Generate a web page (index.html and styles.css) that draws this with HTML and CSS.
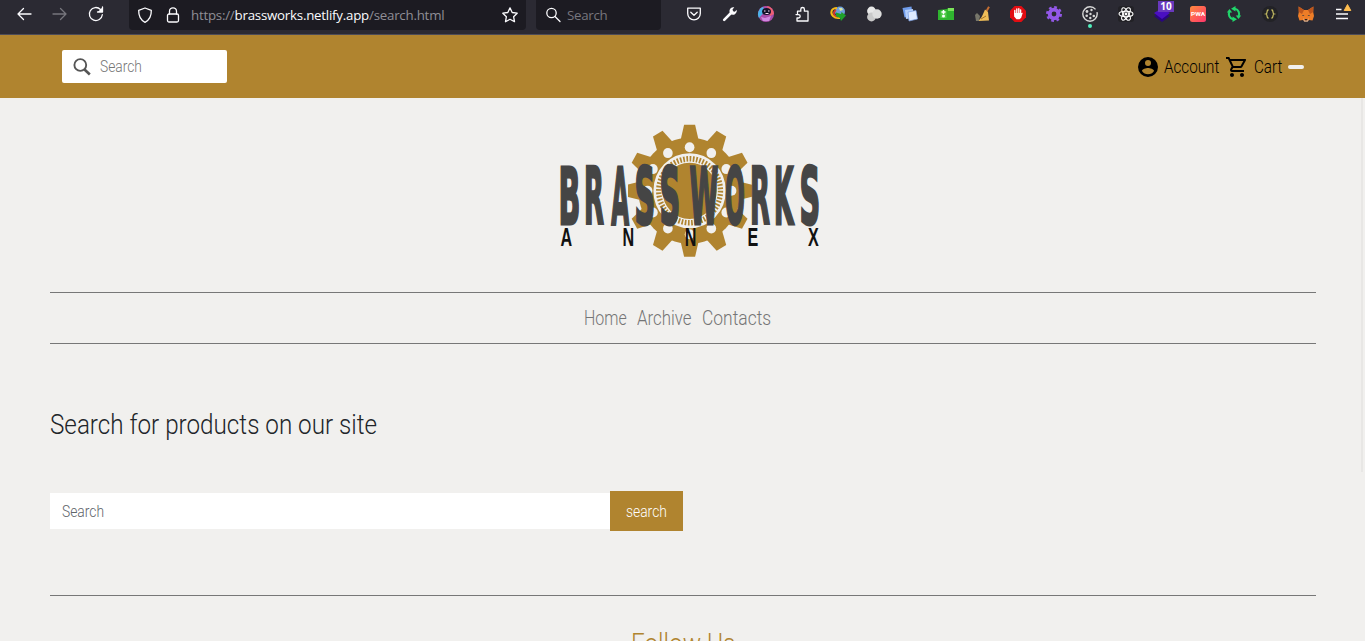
FILE: index.html
```html
<!DOCTYPE html>
<html lang="en">
<head>
<meta charset="utf-8">
<title>Brassworks Annex</title>
<link rel="stylesheet" href="styles.css">
</head>
<body>
<div class="chrome">
  <div class="history">
    <svg viewBox="0 0 16 16" class="ico"><path d="M15 8H2M7.500 2.500L2 8l5.500 5.500"/></svg>
    <svg viewBox="0 0 16 16" class="ico dim"><path d="M1 8h13M8.500 2.500L14 8l-5.500 5.500"/></svg>
    <svg viewBox="0 0 16 16" class="ico"><path d="M14.300 8.700A6.500 6.500 0 1 1 12.500 3.500L14 5M14.500 1v5H9.500"/><path d="M14.800 1v5h-5z" fill="#fbfbfe" stroke="none"/></svg>
  </div>
  <div class="urlbar">
    <svg viewBox="0 0 16 16" class="ico"><path d="M8 1l6.300 2.300C14.500 9 12.500 13 8 15.300 3.500 13 1.500 9 1.700 3.300z"/></svg>
    <svg viewBox="0 0 16 16" class="ico"><rect x="2.500" y="7" width="11" height="8" rx="1.500"/><path d="M4.500 7V4.300a3.500 3.500 0 0 1 7 0V7"/></svg>
    <span class="url">https://<b>brassworks.netlify.app</b>/search.html</span>
    <svg viewBox="0 0 16 16" class="ico star"><path d="M8 .9l2.200 4.600 5 .7-3.600 3.500.9 5L8 12.300l-4.500 2.400.9-5L.8 6.200l5-.7z"/></svg>
  </div>
  <div class="quick">
    <svg viewBox="0 0 16 16" class="ico"><circle cx="6.500" cy="6" r="4.700"/><path d="M10 9.500l5 5"/></svg>
    <span>Search</span>
  </div>
  <div class="addons">
    <svg viewBox="0 0 16 16" class="ico"><path d="M1.700 2.200h12.600v5.300a6.300 6.300 0 0 1-12.600 0z"/><path d="M4.800 6.300L8 9.300l3.200-3"/></svg>
    <svg viewBox="0 0 16 16"><path d="M2.200 13.800L9.500 6.500" stroke="#fbfbfe" stroke-width="2.600" stroke-linecap="round"/><path d="M14.700 3.700a4 4 0 0 1-6 4.400L7.500 6a4 4 0 0 1 4.800-4.700L10.500 3.500l.6 1.700 1.700.5z" fill="#fbfbfe"/></svg>
    <svg viewBox="0 0 16 16"><circle cx="8" cy="8" r="8" fill="#a94ca9"/><path d="M1 12A8 8 0 0 1 5 .7L7 5z" fill="#4bb4e9"/><path d="M9 0a8 8 0 0 1 7 8l-4 2z" fill="#ee6073"/><ellipse cx="8.500" cy="5.500" rx="4.500" ry="3.500" fill="#15142a"/><path d="M6 5h1.500m2.500 0h1.500M7.500 7.500h3" stroke="#ffd9f5"/><path d="M3 11l4 1 6-2-2 5H5z" fill="#cf88df"/></svg>
    <svg viewBox="0 0 16 16" class="ico"><path d="M2 7V4.500M2 7h1.800a1.700 1.700 0 0 1 0 3.500H2V15h12V5.500h-3.500V3.200a1.800 1.800 0 0 0-3.600 0v2.300H3.500V7"  stroke="none"/><path d="M3.500 7.500V5.200h3.300V3.300a1.800 1.800 0 0 1 3.600 0v1.900H14V15H3v-3h1.500a1.700 1.700 0 0 0 0-3.400H2"/></svg>
    <svg viewBox="0 0 16 16"><circle cx="10" cy="5.500" r="5" fill="#6e9fda"/><path d="M7 2C1 2 0 7 3 10s5 2 7 2" fill="none" stroke="#f2b817" stroke-width="2"/><path d="M6 4C2 7 4 10 8 11" fill="none" stroke="#db3931" stroke-width="1.600"/><path d="M6 6.500l5 1.500.5-2L16 9.500 11 15l-1-3-4-1.500z" fill="#1fa12b"/><path d="M9 2h3l1 2-3 1z" fill="#d7e4a7"/></svg>
    <svg viewBox="0 0 16 16"><circle cx="5.500" cy="5" r="4.400" fill="#e8e8e8"/><circle cx="5.500" cy="11" r="4.400" fill="#c9c9c9"/><circle cx="11" cy="8" r="4.700" fill="#dedede"/></svg>
    <svg viewBox="0 0 16 16"><path d="M.5 2l9-1.500 1 9-8 2z" fill="#6f9bea"/><path d="M3 4l8-1 1 9-8 1z" fill="#b5cff9"/><path d="M6 6l8-1.500L15.500 13 7 15z" fill="#dfeafe" stroke="#789ee2" stroke-width=".7"/></svg>
    <svg viewBox="0 0 16 16"><path d="M0 4l9-1 1-1h6v12H0z" fill="#2fb52f"/><path d="M10 2h6v3h-6z" fill="#7be45a"/><path d="M2.500 5h6v7h-6z" fill="#56cc4d"/><path d="M5.500 4v4M3.500 6h4" stroke="#fff" stroke-width="1.500"/><circle cx="5.500" cy="10" r="1.500" fill="#fff"/></svg>
    <svg viewBox="0 0 16 16"><path d="M12 6L15 .8" stroke="#c56d31" stroke-width="2"/><path d="M11 3.500l3 2.500 1 8.500L4 15c4-3 5-7 7-11.500z" fill="#efbd58"/><path d="M1 9l2-2 3 3-1 5H2z" fill="#77766b"/><path d="M7 13l5-3" stroke="#a97528"/></svg>
    <svg viewBox="0 0 16 16"><path d="M4.700 0h6.600L16 4.700v6.600L11.300 16H4.700L0 11.300V4.700z" fill="#e20d12"/><path d="M4.800 8V4.500M6.800 7V3M8.800 7V2.800M10.600 8V4" stroke="#fff" stroke-width="1.400" stroke-linecap="round"/><path d="M4.100 7h7.200l1.500-.3-1.600 5-1.700 1.600H6.500L4.100 10.500z" fill="#fff"/></svg>
    <svg viewBox="0 0 16 16"><circle cx="8" cy="8" r="6.700" fill="none" stroke="#9358e8" stroke-width="2.600" stroke-dasharray="2.700 2.560"/><circle cx="8" cy="8" r="4.300" fill="none" stroke="#9358e8" stroke-width="3.800"/></svg>
    <svg viewBox="0 0 16 16" class="cookie"><circle cx="8" cy="8" r="7.200" fill="none" stroke="#d8d8d8" stroke-width="1.400" stroke-dasharray="40 3 2.240" stroke-dashoffset="0"/><g fill="#d8d8d8"><circle cx="5" cy="5.500" r="1.400"/><circle cx="4.700" cy="9.800" r="1.300"/><circle cx="8.500" cy="8" r="1.200"/><circle cx="8.300" cy="12" r="1.200"/><circle cx="11.800" cy="10" r="1.300"/><circle cx="9.500" cy="4" r="1.200"/></g><circle cx="8" cy="20" r="2" fill="#4fefbd"/></svg>
    <svg viewBox="0 0 16 16"><rect width="16" height="16" rx="3" fill="#222126"/><g fill="none" stroke="#fff" stroke-width="1.100"><ellipse cx="8" cy="8" rx="7" ry="2.700"/><ellipse cx="8" cy="8" rx="7" ry="2.700" transform="rotate(60 8 8)"/><ellipse cx="8" cy="8" rx="7" ry="2.700" transform="rotate(-60 8 8)"/></g><circle cx="8" cy="8" r="1.400" fill="#fff"/></svg>
    <div class="badged"><svg viewBox="0 0 16 16"><path d="M0 10l8-5 8 5-8 6z" fill="#2a0580"/><path d="M0 7l8-5 8 5-8 6z" fill="#4a0fc2"/></svg><span class="badge">10</span></div>
    <svg viewBox="0 0 16 16"><defs><linearGradient id="pwa" x2="1" y2="1"><stop stop-color="#ff8a3d"/><stop offset="1" stop-color="#ff356d"/></linearGradient></defs><rect width="16" height="16" rx="2.500" fill="url(#pwa)"/><text x="8" y="10" class="pwa" textLength="14" lengthAdjust="spacingAndGlyphs">PWA</text></svg>
    <svg viewBox="0 0 16 16"><path d="M7 13.200A5.300 5.300 0 0 1 3.500 5.500M9 2.800A5.300 5.300 0 0 1 12.500 10.500" fill="none" stroke="#20d66b" stroke-width="2"/><path d="M5 2.800L9.500 0v5.600zM11 13.200L6.500 16v-5.600zM.8 6.500h5.400L3.500 3zM9.800 9.500h5.400L12.500 13z" fill="#20d66b"/></svg>
    <svg viewBox="0 0 16 16"><circle cx="8" cy="8" r="8" fill="#222226"/><path d="M6.600 4H6c-1.500 0-.3 3.500-2 4 1.700.5.500 4 2 4h.6M9.400 4h.6c1.500 0 .3 3.500 2 4-1.700.5-.5 4-2 4h-.6" fill="none" stroke="#c5bc63" stroke-width="1.300"/></svg>
    <svg viewBox="0 0 16 16"><path d="M.6.600L6 4h4L15.400.600 15.200 6l.8 4-1.500 4.500L11 14l-1.500 1.500h-3L5 14l-3.500.5L0 10l.8-4z" fill="#ed7d27"/><path d="M.6.600L6 4 4 8 .8 6zM15.400.600L10 4l2 4 3.200-2z" fill="#bd561d"/><path d="M5 9l1.500 1H4zM11 9l-1.500 1H12z" fill="#263746"/><path d="M5 11.500l1.500 3h3l1.500-3-1 4H6z" fill="#d6c4b5"/><path d="M6.800 13h2.400v1.300H6.800z" fill="#29201f"/></svg>
    <svg viewBox="0 0 16 16" class="menu"><path d="M2 3.500h5.500M2 8h12M2 12.500h12" stroke="#fbfbfe" stroke-width="1.300"/><path d="M13.500-1.500l3.300 6h-6.600z" fill="#ffbd4f" stroke="#ffbd4f" stroke-linejoin="round"/></svg>
  </div>
</div>

<header class="topbar">
  <div class="finder">
    <svg viewBox="0 0 18 18"><circle cx="7.300" cy="7" r="5.900"/><path d="M11.500 11.500l5.300 5" class="handle"/></svg>
    <span class="abel t-find">Search</span>
  </div>
  <div class="tools">
    <svg viewBox="0 0 24 24" class="person"><path d="M12 2a10 10 0 1 0 0 20 10 10 0 0 0 0-20zm0 3a3 3 0 1 1 0 6 3 3 0 0 1 0-6zm0 14.200a7.200 7.200 0 0 1-6-3.220c.03-1.990 4-3.080 6-3.080 1.990 0 5.970 1.090 6 3.080a7.200 7.200 0 0 1-6 3.220z"/></svg>
    <span class="abel t-account">Account</span>
    <svg viewBox="0 0 24 24" class="cart"><path d="M15.550 13c.75 0 1.410-.41 1.750-1.030l3.580-6.490A.996.996 0 0 0 20.010 4H5.210l-.94-2H1v2h2l3.600 7.590-1.350 2.440C4.520 15.370 5.480 17 7 17h12v-2H7l1.100-2h7.450zM6.160 6h12.150l-2.760 5H8.530L6.160 6zM7 18c-1.100 0-1.990.9-1.990 2S5.900 22 7 22s2-.9 2-2-.9-2-2-2zm10 0c-1.100 0-1.990.9-1.990 2s.89 2 1.990 2 2-.9 2-2-.9-2-2-2z"/></svg>
    <span class="abel t-cart">Cart</span>
    <i class="count"></i>
  </div>
</header>

<div class="logo">
  <svg width="264" height="136" viewBox="558 123 264 136">
    <defs>
      <g id="tooth"><path d="M-9.500-50L-5.700-66h11.400L9.500-50z"/></g>
      <clipPath id="sides"><path d="M628 120h124v140H628z"/></clipPath>
    </defs>
    <g clip-path="url(#sides)"><g transform="translate(689.600 190.800) scale(.965 1)">
      <g fill="#b0842f">
        <circle r="53"/>
        <use href="#tooth"/><use href="#tooth" transform="rotate(30)"/><use href="#tooth" transform="rotate(60)"/><use href="#tooth" transform="rotate(90)"/><use href="#tooth" transform="rotate(120)"/><use href="#tooth" transform="rotate(150)"/><use href="#tooth" transform="rotate(180)"/><use href="#tooth" transform="rotate(210)"/><use href="#tooth" transform="rotate(240)"/><use href="#tooth" transform="rotate(270)"/><use href="#tooth" transform="rotate(300)"/><use href="#tooth" transform="rotate(330)"/>
      </g>
      <g fill="#f1f0ee">
        <circle cy="-43.500" r="5"/><circle cy="43.500" r="5"/><circle cx="43.500" r="5"/><circle cx="-43.500" r="5"/>
        <circle cx="22.500" cy="-37.700" r="5"/><circle cx="-22.500" cy="-37.700" r="5"/><circle cx="22.500" cy="37.700" r="5"/><circle cx="-22.500" cy="37.700" r="5"/>
        <circle cx="38" cy="-21.700" r="5"/><circle cx="-38" cy="-21.700" r="5"/><circle cx="38" cy="21.700" r="5"/><circle cx="-38" cy="21.700" r="5"/>
      </g>
      <circle r="32.800" fill="none" stroke="#f1f0ee" stroke-width="9.400"/>
      <circle r="32" fill="none" stroke="#b0842f" stroke-width="5.500" pathLength="120" stroke-dasharray="1.050 .95"/>
    </g></g>
    <g class="brass">
      <text transform="translate(558.500 224) scale(.363 1)">B</text>
      <text transform="translate(583.900 224) scale(.327 1)">R</text>
      <text transform="translate(611.200 224) scale(.291 1)">A</text>
      <text transform="translate(634.600 224) scale(.364 1)">S</text>
      <text transform="translate(659.600 224) scale(.364 1)">S</text>
      <text transform="translate(689.600 224) scale(.332 1)">W</text>
      <text transform="translate(725.100 224) scale(.296 1)">O</text>
      <text transform="translate(749.900 224) scale(.327 1)">R</text>
      <text transform="translate(773.900 224) scale(.317 1)">K</text>
      <text transform="translate(799.600 224) scale(.364 1)">S</text>
    </g>
    <g class="annex">
      <text transform="translate(566.300 245.500) scale(.62 1)">A</text>
      <text transform="translate(628.300 245.500) scale(.62 1)">N</text>
      <text transform="translate(690.500 245.500) scale(.62 1)">N</text>
      <text transform="translate(752.800 245.500) scale(.62 1)">E</text>
      <text transform="translate(813.500 245.500) scale(.62 1)">X</text>
    </g>
  </svg>
</div>

<nav class="nav">
  <a class="abel t-home">Home</a>
  <a class="abel t-archive">Archive</a>
  <a class="abel t-contacts">Contacts</a>
</nav>

<main class="main">
  <h1 class="abel t-title">Search for products on our site</h1>
  <form class="form">
    <div class="field"><span class="abel t-field">Search</span></div>
    <div class="submit"><span class="abel t-submit">search</span></div>
  </form>
</main>
<footer class="footer"><h2 class="abel t-follow">Follow Us</h2></footer>
<i class="scroll"></i>
</body>
</html>
```
FILE: styles.css
```css
* { box-sizing: border-box; }
html, body { height: 641px; overflow: hidden; }
body { margin: 0; background: #f1f0ee; font-family: "Roboto", "Liberation Sans", sans-serif; position: relative; }
svg { display: block; overflow: visible; flex: none; }

.chrome { height: 35px; background: #2b2a33; border-bottom: 1px solid #4d4c58; display: flex; align-items: flex-start; font: 13.300px "Open Sans", "Noto Sans", sans-serif; }
.ico { width: 16px; height: 16px; fill: none; stroke: #fbfbfe; stroke-width: 1.300; stroke-linecap: round; stroke-linejoin: round; }
.dim { stroke: #77767d; }
.history { width: 129px; padding: 6px 0 0 16px; display: flex; gap: 20px; }
.urlbar { width: 397px; height: 30px; background: #1c1b22; border-radius: 0 0 4px 4px; display: flex; align-items: center; padding: 0 8px; gap: 12px; }
.url { flex: 1; margin-left: -2px; color: #8f8e96; white-space: nowrap; letter-spacing: -.23px; }
.url b { color: #fbfbfe; font-weight: 400; }
.quick { width: 125px; height: 30px; margin-left: 10px; background: #1c1b22; border-radius: 0 0 4px 4px; display: flex; align-items: center; padding-left: 9px; gap: 6px; color: #77767d; letter-spacing: -.3px; }
.addons { margin-left: 15px; padding-top: 6px; display: grid; grid-template-columns: repeat(19, 36px); justify-items: center; }
.addons svg { width: 16px; height: 16px; }
.badged { position: relative; }
.badge { position: absolute; left: 4px; top: -5px; width: 16px; height: 11px; background: #6938bd; color: #fff; font: 700 10px/11px "Open Sans", sans-serif; letter-spacing: 0; text-align: center; }
.pwa { font: 700 6px "Roboto", sans-serif; fill: #fff; text-anchor: middle; }

.abel { display: block; font-family: "Roboto", sans-serif; font-weight: 350; white-space: nowrap; transform-origin: 0 50%; margin: 0; }
.topbar { height: 63px; background: #b0842f; display: flex; justify-content: space-between; align-items: center; padding: 0 61px 0 62px; }
.finder { width: 165px; height: 33px; background: #fff; border-radius: 2px; display: flex; align-items: center; padding-left: 11px; gap: 9px; color: #757575; }
.finder svg { width: 18px; height: 18px; fill: none; stroke: #555; stroke-width: 1.900; }
.finder .handle { stroke-width: 2.600; }
.tools { display: flex; align-items: center; color: #000; }
.person { width: 24px; height: 24px; }
.cart { width: 24px; height: 24px; }
.count { width: 16px; height: 4px; border-radius: 2px; background: #f1f0ee; }
.t-find { width: 43px; font-size: 16px; transform: scaleX(.86); }
.t-account { width: 56px; margin: 0 5px 0 4px; font-size: 19px; transform: scaleX(.8); }
.t-cart { width: 30px; margin: 0 4px 0 5px; font-size: 19px; transform: scaleX(.8); }

.logo { height: 194px; padding: 25px 0 0 558px; }
.brass { font: 700 79px "DejaVu Sans", sans-serif; fill: #454545; stroke: #454545; stroke-width: 3px; stroke-linejoin: miter; }
.annex { font: 700 26px "Liberation Sans", sans-serif; fill: #111; text-anchor: middle; }
.nav { height: 52px; margin: 0 49px 0 50px; border-top: 1px solid #777; border-bottom: 1px solid #777; display: flex; align-items: center; color: #757575; font-size: 19.500px; padding-left: 534px; }
.t-home { width: 53px; transform: scaleX(.82); }
.t-archive { width: 65px; transform: scaleX(.865); }
.t-contacts { width: 70px; transform: scaleX(.895); }
.main { height: 251px; margin: 0 49px 0 50px; padding-top: 63px; }
.t-title { font-size: 28px; line-height: 36px; color: #212529; width: 329px; transform: scaleX(.865); }
.form { display: flex; align-items: center; margin: 48px 0 0; }
.field { width: 560px; height: 36px; background: #fff; padding-left: 12px; display: flex; align-items: center; color: #5e646a; }
.submit { width: 73px; height: 40px; background: #b0842f; padding-left: 16px; display: flex; align-items: center; color: #fff; }
.t-field, .t-submit { font-size: 16px; transform: scaleX(.865); }
.footer { height: 46px; margin: 0 49px 0 50px; border-top: 1px solid #777; padding: 30px 0 0 581px; overflow: hidden; }
.t-follow { font-size: 28px; line-height: 36px; color: #b0842f; transform: scaleX(.87); }
.scroll { position: absolute; left: 1361px; top: 98px; width: 2px; height: 374px; background: #e8e7e5; }
```
